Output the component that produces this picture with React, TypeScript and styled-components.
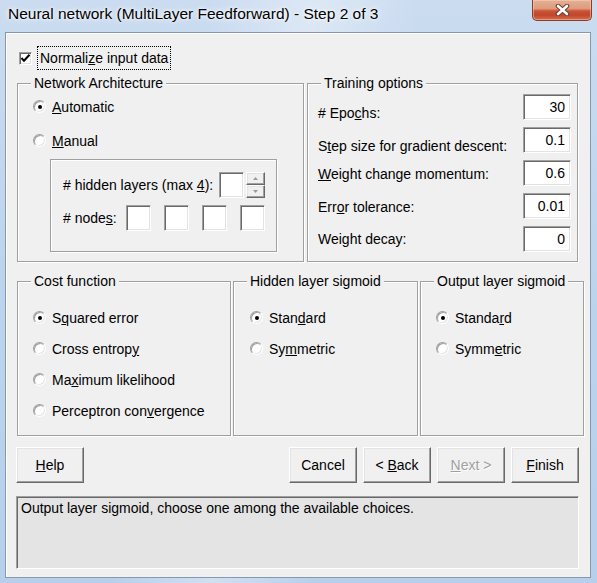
import React from "react";
import styled, { createGlobalStyle } from "styled-components";

/** Constants */
const UI_FONT = `"Liberation Sans", Arial, sans-serif`;
const FACE = "#f0f0f0";
const SHADOW = "#a0a0a0";
const DARK = "#696969";
const LIGHT = "#e3e3e3";

const GlobalStyle = createGlobalStyle`
  html, body { margin: 0; padding: 0; overflow: hidden; background: #c4d8ee; }
  * { box-sizing: border-box; }
`;

const Window = styled.div`
  width: 597px;
  height: 583px;
  display: flex;
  flex-direction: column;
  font-family: ${UI_FONT};
  font-size: 14px;
  color: #000;
  background:
    linear-gradient(100deg, rgba(255,255,255,0) 30%, rgba(255,255,255,0.35) 45%, rgba(255,255,255,0) 60%),
    linear-gradient(180deg, #cbdcf0 0%, #bfd5ee 40%, #b7cfeb 100%);
`;

const TitleBar = styled.div`
  height: 32px;
  display: flex;
  align-items: flex-start;
  padding-left: 8px;
`;

const TitleText = styled.div`
  margin-top: 5px;
  font-size: 15.5px;
  line-height: 18px;
  color: #000;
  text-shadow: 0 0 6px #fff, 0 0 3px #fff;
`;

const CloseButton = styled.div`
  margin-left: auto;
  margin-right: 5px;
  width: 60px;
  height: 21px;
  display: flex;
  align-items: center;
  justify-content: center;
  border: 1px solid #8b3b27;
  border-top: none;
  border-radius: 0 0 5px 5px;
  background: linear-gradient(
    180deg,
    #e6b092 0%,
    #dca083 35%,
    #e39c7b 42%,
    #c85436 55%,
    #c2462b 75%,
    #d26d4d 100%
  );
  box-shadow: inset 0 0 0 1px rgba(255, 220, 200, 0.45);
`;

const Client = styled.div`
  flex: 1;
  margin: 0 6px 5px 5px;
  padding-left: 11px;
  display: flex;
  flex-direction: column;
  background: ${FACE};
  border: 1px solid #8598ad;
  box-shadow: inset 1px 1px 0 #fff;
`;

const CheckRow = styled.div`
  margin-top: 13px;
  margin-left: 2px;
  height: 24px;
  display: flex;
  align-items: center;
`;

const sunken = `
  border: 1px solid;
  border-color: ${SHADOW} #fff #fff ${SHADOW};
  box-shadow: inset 1px 1px 0 ${DARK}, inset -1px -1px 0 ${LIGHT};
`;

const raised = `
  border: 1px solid;
  border-color: #fff ${DARK} ${DARK} #fff;
  box-shadow: inset -1px -1px 0 ${SHADOW}, inset 1px 1px 0 ${LIGHT};
`;

const CheckBox = styled.span`
  width: 13px;
  height: 13px;
  display: flex;
  align-items: center;
  justify-content: center;
  background: #fff;
  ${sunken}
`;

const FocusLabel = styled.span`
  margin-left: 5px;
  height: 24px;
  padding: 0 2px;
  line-height: 22px;
  border: 1px dotted #000;
`;

const Row = styled.div<{ $top: number; $gap: number; $height: number }>`
  margin-top: ${(p) => p.$top}px;
  height: ${(p) => p.$height}px;
  display: flex;
  gap: ${(p) => p.$gap}px;
`;

const Group = styled.div<{ $w: number; $pt: number; $pl: number }>`
  position: relative;
  width: ${(p) => p.$w}px;
  height: 100%;
  padding: ${(p) => p.$pt}px 6px 0 ${(p) => p.$pl}px;
  display: flex;
  flex-direction: column;
  border: 1px solid ${SHADOW};
  box-shadow: inset 1px 1px 0 #fff, 1px 1px 0 #fff;
`;

const GroupCaption = styled.span`
  position: absolute;
  top: -9px;
  left: 13px;
  padding: 0 3px;
  line-height: 16px;
  background: ${FACE};
  white-space: nowrap;
`;

const Options = styled.div<{ $gap: number }>`
  display: flex;
  flex-direction: column;
  gap: ${(p) => p.$gap}px;
`;

const Option = styled.label`
  height: 17px;
  display: flex;
  align-items: center;
  gap: 6px;
  white-space: nowrap;
`;

const RadioDot = styled.span<{ $checked?: boolean }>`
  position: relative;
  width: 13px;
  height: 13px;
  flex: none;
  border-radius: 50%;
  background: #fff;
  border: 1px solid;
  border-color: ${SHADOW} #fff #fff ${SHADOW};
  box-shadow: inset 1px 1px 0 ${SHADOW}, inset -1px -1px 0 ${LIGHT};

  &::after {
    content: "";
    display: ${(p) => (p.$checked ? "block" : "none")};
    position: absolute;
    left: 3.5px;
    top: 3.5px;
    width: 4px;
    height: 4px;
    border-radius: 50%;
    background: #000;
  }
`;

const SubBox = styled.div`
  margin: 10px 0 0 17px;
  width: 227px;
  height: 93px;
  padding: 12px 11px 0 12px;
  display: flex;
  flex-direction: column;
  gap: 7px;
  border: 1px solid ${SHADOW};
  box-shadow: inset 1px 1px 0 #fff, 1px 1px 0 #fff;
`;

const SubRow = styled.div`
  height: 26px;
  display: flex;
  align-items: center;
  justify-content: space-between;
`;

const Cells = styled.div`
  display: flex;
  gap: 13px;
`;

const Edit = styled.span<{ $w: number }>`
  width: ${(p) => p.$w}px;
  height: 26px;
  padding-right: 5px;
  display: flex;
  align-items: center;
  justify-content: flex-end;
  background: #fff;
  ${sunken}
`;

const SpinWrap = styled.div`
  display: flex;
  align-items: center;
  gap: 2px;
`;

const Spinner = styled.div`
  display: flex;
  flex-direction: column;
`;

const SpinHalf = styled.span`
  width: 19px;
  height: 13px;
  display: flex;
  align-items: center;
  justify-content: center;
  background: ${FACE};
  ${raised}
`;

const Fields = styled.div`
  display: flex;
  flex-direction: column;
  gap: 7px;
`;

const FieldRow = styled.div`
  height: 26px;
  display: flex;
  align-items: center;
  justify-content: space-between;
`;

const FieldLabel = styled.span<{ $drop?: number }>`
  margin-top: ${(p) => (p.$drop ?? 0) * 2}px;
  white-space: nowrap;
`;

const ButtonRow = styled.div`
  margin-top: 11px;
  margin-left: -1px;
  height: 36px;
  display: flex;
  justify-content: space-between;
  padding-right: 11px;
`;

const ButtonGroup = styled.div`
  display: flex;
  gap: 6px;
`;

const Button = styled.span<{ $disabled?: boolean }>`
  width: 68px;
  height: 36px;
  display: flex;
  align-items: center;
  justify-content: center;
  background: ${FACE};
  color: ${(p) => (p.$disabled ? SHADOW : "#000")};
  text-shadow: ${(p) => (p.$disabled ? "1px 1px 0 #fff" : "none")};
  ${raised}
`;

const Status = styled.div`
  margin-top: 13px;
  margin-left: -1px;
  width: 563px;
  height: 73px;
  padding: 3px 4px;
  line-height: 16px;
  background: #e4e4e4;
  border: 1px solid;
  border-color: ${SHADOW} #fff #fff ${SHADOW};
  box-shadow: inset 1px 1px 0 ${DARK};
`;

const Tick = () => (
  <svg width="11" height="11" viewBox="0 0 11 11">
    <path d="M1.5 5 L4 7.8 L9.5 1.8" fill="none" stroke="#000" strokeWidth="2" />
  </svg>
);

const CloseGlyph = () => (
  <svg width="15" height="12" viewBox="0 0 15 12">
    <path d="M3 2 L12 10 M12 2 L3 10" stroke="#6e3a2e" strokeWidth="4.6" strokeLinecap="round" />
    <path d="M3 2 L12 10 M12 2 L3 10" stroke="#fff" strokeWidth="2.6" strokeLinecap="round" />
  </svg>
);

const Arrow: React.FC<{ up?: boolean }> = ({ up }) => (
  <svg width="5" height="3" viewBox="0 0 5 3">
    <path d={up ? "M2.5 0 L5 3 L0 3 Z" : "M0 0 L5 0 L2.5 3 Z"} fill="#9a9a9a" />
  </svg>
);

const Radio: React.FC<{ checked?: boolean; children: React.ReactNode }> = ({ checked, children }) => (
  <Option>
    <RadioDot $checked={checked} />
    <span>{children}</span>
  </Option>
);

const trainingFields: Array<{ label: React.ReactNode; value: string; drop?: number }> = [
  { label: <># Epo<u>c</u>hs:</>, value: "30", drop: 6 },
  { label: <>S<u>t</u>ep size for gradient descent:</>, value: "0.1", drop: 6 },
  { label: <><u>W</u>eight change momentum:</>, value: "0.6", drop: 1 },
  { label: <>Err<u>o</u>r tolerance:</>, value: "0.01", drop: 1 },
  { label: <>Wei<u>g</u>ht decay:</>, value: "0" },
];

const App: React.FC = () => (
  <Window>
    <GlobalStyle />
    <TitleBar>
      <TitleText>Neural network (MultiLayer Feedforward) - Step 2 of 3</TitleText>
      <CloseButton>
        <CloseGlyph />
      </CloseButton>
    </TitleBar>

    <Client>
      <CheckRow>
        <CheckBox>
          <Tick />
        </CheckBox>
        <FocusLabel>
          Normali<u>z</u>e input data
        </FocusLabel>
      </CheckRow>

      <Row $top={13} $gap={3} $height={179}>
        <Group $w={287} $pt={14} $pl={15}>
          <GroupCaption>Network Architecture</GroupCaption>
          <Options $gap={17}>
            <Radio checked>
              <u>A</u>utomatic
            </Radio>
            <Radio>
              <u>M</u>anual
            </Radio>
          </Options>
          <SubBox>
            <SubRow>
              <span>
                # hidden layers (max <u>4</u>):
              </span>
              <SpinWrap>
                <Edit $w={25} />
                <Spinner>
                  <SpinHalf>
                    <Arrow up />
                  </SpinHalf>
                  <SpinHalf>
                    <Arrow />
                  </SpinHalf>
                </Spinner>
              </SpinWrap>
            </SubRow>
            <SubRow>
              <span>
                # node<u>s</u>:
              </span>
              <Cells>
                {[0, 1, 2, 3].map((i) => (
                  <Edit key={i} $w={25} />
                ))}
              </Cells>
            </SubRow>
          </SubBox>
        </Group>

        <Group $w={271} $pt={10} $pl={10}>
          <GroupCaption>Training options</GroupCaption>
          <Fields>
            {trainingFields.map((f) => (
              <FieldRow key={f.value}>
                <FieldLabel $drop={f.drop}>{f.label}</FieldLabel>
                <Edit $w={48}>{f.value}</Edit>
              </FieldRow>
            ))}
          </Fields>
        </Group>
      </Row>

      <Row $top={19} $gap={2} $height={155}>
        <Group $w={214} $pt={27} $pl={15}>
          <GroupCaption>Cost function</GroupCaption>
          <Options $gap={14}>
            <Radio checked>
              S<u>q</u>uared error
            </Radio>
            <Radio>
              Cross entrop<u>y</u>
            </Radio>
            <Radio>
              Ma<u>x</u>imum likelihood
            </Radio>
            <Radio>
              Perceptron con<u>v</u>ergence
            </Radio>
          </Options>
        </Group>
        <Group $w={185} $pt={27} $pl={16}>
          <GroupCaption>Hidden layer sigmoid</GroupCaption>
          <Options $gap={14}>
            <Radio checked>
              Stan<u>d</u>ard
            </Radio>
            <Radio>
              Sy<u>m</u>metric
            </Radio>
          </Options>
        </Group>
        <Group $w={164} $pt={27} $pl={15}>
          <GroupCaption>Output layer sigmoid</GroupCaption>
          <Options $gap={14}>
            <Radio checked>
              Standa<u>r</u>d
            </Radio>
            <Radio>
              Symm<u>e</u>tric
            </Radio>
          </Options>
        </Group>
      </Row>

      <ButtonRow>
        <Button>
          <span>
            <u>H</u>elp
          </span>
        </Button>
        <ButtonGroup>
          <Button>Cancel</Button>
          <Button>
            <span>
              &lt; <u>B</u>ack
            </span>
          </Button>
          <Button $disabled>
            <span>
              <u>N</u>ext &gt;
            </span>
          </Button>
          <Button>
            <span>
              <u>F</u>inish
            </span>
          </Button>
        </ButtonGroup>
      </ButtonRow>

      <Status>Output layer sigmoid, choose one among the available choices.</Status>
    </Client>
  </Window>
);

export default App;
